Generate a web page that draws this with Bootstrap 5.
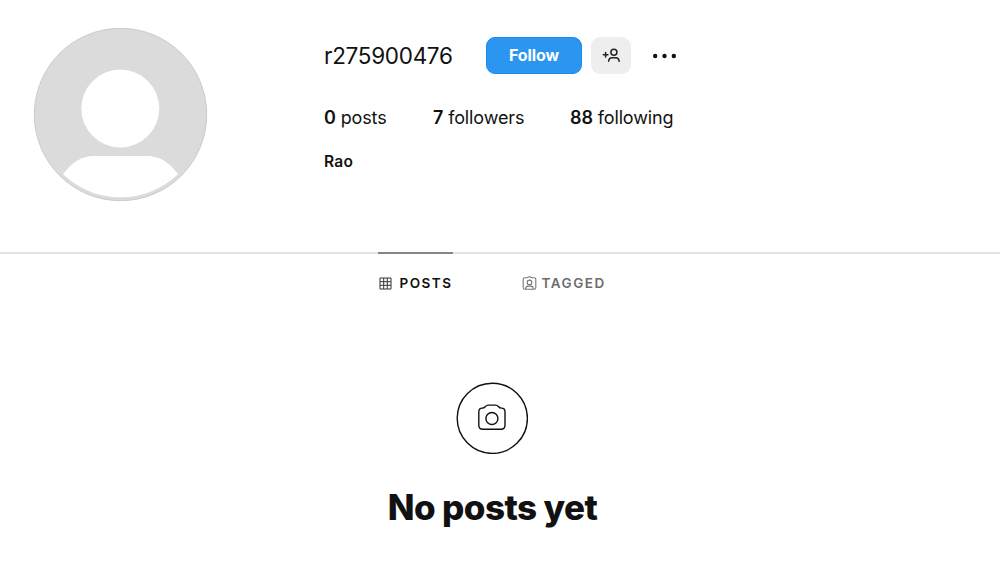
<!DOCTYPE html>
<html lang="en">
<head>
<meta charset="utf-8">
<meta name="viewport" content="width=device-width, initial-scale=1">
<title>r275900476</title>
<link href="https://cdn.jsdelivr.net/npm/bootstrap@5.3.0/dist/css/bootstrap.min.css" rel="stylesheet">
<style>
body{font-family:Inter,"Liberation Sans",sans-serif;color:#111;background:#fff;height:571px;overflow:hidden}
.profile{height:252px;padding:27px 0 0 33px}
.avatar{width:175px;height:175px}
.info{margin-left:116px;padding-top:10px}
.username{font-size:22.5px;line-height:36px;font-weight:400;width:162px;letter-spacing:-.3px;white-space:nowrap}
.btn-follow{width:96px;height:37px;border-radius:9px;background:#2b95f0;border:1px solid #168cf0;color:#fff;font-size:16px;font-weight:700;padding:0 0 2px;letter-spacing:-.1px}
.btn-follow:hover{background:#1877f2;color:#fff}
.btn-suggest{width:40px;height:37px;border-radius:9px;background:#eee;border:0;margin-left:9px;padding:0}
.btn-more{margin-left:20px;border:0;padding:0}
.stats{font-size:18px;line-height:24px;margin-top:32px;white-space:nowrap;letter-spacing:-.13px}
.stats b,.fullname{font-weight:600}
.stat-a{width:109px}.stat-b{width:137px}
.fullname{font-size:15.5px;line-height:20px;margin-top:22px;letter-spacing:.3px}
.tabs{border-top:2px solid #e4e4e4;height:130px;padding-left:378px}
.tab{height:60px;margin-top:-2px;border-top:2px solid transparent;font-size:13.5px;font-weight:600;letter-spacing:1.5px;color:#6d6d6d;text-decoration:none;white-space:nowrap}
.tab.current{width:75px;border-color:#858585;color:#111;margin-right:68px}
.tab svg{margin-left:.5px}
.empty{width:984px}
.empty h1{font-size:35px;line-height:44px;font-weight:800;margin:31px 0 0 1px;letter-spacing:-.58px}
</style>
</head>
<body>
<header class="profile d-flex align-items-start">
<svg class="avatar flex-shrink-0" viewBox="33 27 175 175" role="img" aria-label="Profile photo">
<circle cx="120.5" cy="114.5" r="86.2" fill="#dbdbdb" stroke="#cbcbcb"/>
<circle cx="120.3" cy="108.5" r="39" fill="#fff"/>
<path d="M63 174.300Q76 156 94 156H147Q165 156 178 174.300Q153 197.300 120.500 197.300T63 174.300Z" fill="#fff"/>
</svg>
<div class="info">
<div class="d-flex align-items-center">
<h2 class="username mb-0">r275900476</h2>
<button class="btn btn-follow" type="button">Follow</button>
<button class="btn btn-suggest d-flex align-items-center justify-content-center" type="button" aria-label="Similar accounts">
<svg width="20" height="18" viewBox="601 47 20 18" fill="none" stroke="#222" stroke-width="1.5" stroke-linecap="round"><path d="M603.300 54.700h4.600M605.600 52.400v4.600M608.600 61.300q.3-3.600 3.500-3.600h3.500q3.200 0 3.600 3.600"/><circle cx="613.900" cy="52.300" r="3"/></svg>
</button>
<button class="btn btn-more d-flex" type="button" aria-label="Options">
<svg width="28" height="8" viewBox="0 0 28 8" fill="#111"><circle cx="4.200" cy="4" r="2.200"/><circle cx="13.500" cy="4" r="2.200"/><circle cx="22.800" cy="4" r="2.200"/></svg>
</button>
</div>
<div class="stats d-flex">
<div class="stat-a"><b>0</b> posts</div><div class="stat-b"><b>7</b> followers</div><div><b>88</b> following</div>
</div>
<div class="fullname">Rao</div>
</div>
</header>
<nav class="tabs d-flex">
<a class="tab current d-flex align-items-center" href="#">
<svg class="me-2" width="13" height="13" viewBox="0 0 13 13" fill="none" stroke="#333" stroke-width="1"><path d="M1 1h11v11H1zM4.700 1v11M8.300 1v11M1 4.700h11M1 8.300h11"/></svg>POSTS</a>
<a class="tab d-flex align-items-center" href="#">
<svg class="me-1" width="16" height="16" viewBox="0.5 0 16 16" fill="none" stroke="#777" stroke-width="1.1"><path d="M3.200 2.700h2.500L8 1.500l2.300 1.200h2.500q1.500 0 1.500 1.500v8.600q0 1.500-1.500 1.500H3.200q-1.500 0-1.500-1.500V4.200q0-1.500 1.500-1.500zM4.200 14q0-2.900 2.600-2.900h2.400q2.600 0 2.600 2.900"/><circle cx="8" cy="7.400" r="2.300"/></svg><span class="tagged-label">TAGGED</span></a>
</nav>
<main class="empty text-center">
<svg class="d-block mx-auto" width="72" height="72" viewBox="456.200 382.200 72 72" fill="none" stroke="#111" stroke-width="1.400"><circle cx="492.500" cy="418.500" r="35.100"/><circle cx="492.100" cy="418.700" r="6"/><path stroke-linejoin="round" d="M482.500 408.300C485.800 408.300 485.500 405.300 488.200 405.300H496C498.700 405.300 498.400 408.300 501.700 408.300Q505.200 408.300 505.200 412V425.500Q505.200 429.500 501.200 429.500H483Q479 429.500 479 425.500V412Q479 408.300 482.500 408.300Z"/></svg>
<h1>No posts yet</h1>
</main>
<script src="https://cdn.jsdelivr.net/npm/bootstrap@5.3.0/dist/js/bootstrap.bundle.min.js"></script>
</body>
</html>
